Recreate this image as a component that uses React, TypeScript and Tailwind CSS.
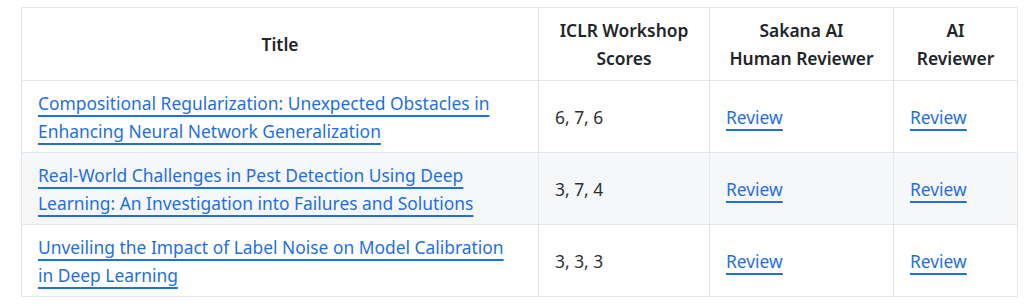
const rows = [
  {
    title: 'Compositional Regularization: Unexpected Obstacles in Enhancing Neural Network Generalization',
    scores: '6, 7, 6',
  },
  {
    title: 'Real-World Challenges in Pest Detection Using Deep Learning: An Investigation into Failures and Solutions',
    scores: '3, 7, 4',
  },
  {
    title: 'Unveiling the Impact of Label Noise on Model Calibration in Deep Learning',
    scores: '3, 3, 3',
  },
];

const linkClass =
  'text-[#1f6fe0] underline decoration-2 underline-offset-[5px] decoration-[#1f6fe0]';

export default function App() {
  return (
    <div className="min-h-screen bg-white pl-[21px] pr-2 pt-[7px] font-['Noto_Sans',sans-serif] text-[17.4px] leading-[28px]">
      <table className="w-[996px] table-fixed border-collapse border border-[#e3e6ea]">
        <colgroup>
          <col className="w-[517px]" />
          <col className="w-[171px]" />
          <col className="w-[184px]" />
          <col className="w-[124px]" />
        </colgroup>
        <thead>
          <tr className="h-[73px]">
            <th className="border border-[#e3e6ea] px-4 py-2 text-center font-semibold text-[#212529]">Title</th>
            <th className="border border-[#e3e6ea] px-3 py-2 text-center font-semibold text-[#212529]">
              ICLR Workshop Scores
            </th>
            <th className="border border-[#e3e6ea] px-2 py-2 text-center font-semibold text-[#212529]">
              Sakana AI
              <br />
              Human Reviewer
            </th>
            <th className="border border-[#e3e6ea] px-4 py-2 text-center font-semibold text-[#212529]">
              AI Reviewer
            </th>
          </tr>
        </thead>
        <tbody>
          {rows.map((r, i) => (
            <tr key={i} className={`h-[72px] ${i % 2 === 1 ? 'bg-[#f6f7f9]' : 'bg-white'}`}>
              <td className="border border-[#e3e6ea] px-4 py-[7px] align-middle">
                <a href="#" className={linkClass}>
                  {r.title}
                </a>
              </td>
              <td className="border border-[#e3e6ea] px-4 py-[7px] align-middle text-[#2b2f33]">{r.scores}</td>
              <td className="border border-[#e3e6ea] px-4 py-[7px] align-middle">
                <a href="#" className={linkClass}>
                  Review
                </a>
              </td>
              <td className="border border-[#e3e6ea] px-4 py-[7px] align-middle">
                <a href="#" className={linkClass}>
                  Review
                </a>
              </td>
            </tr>
          ))}
        </tbody>
      </table>
    </div>
  );
}
